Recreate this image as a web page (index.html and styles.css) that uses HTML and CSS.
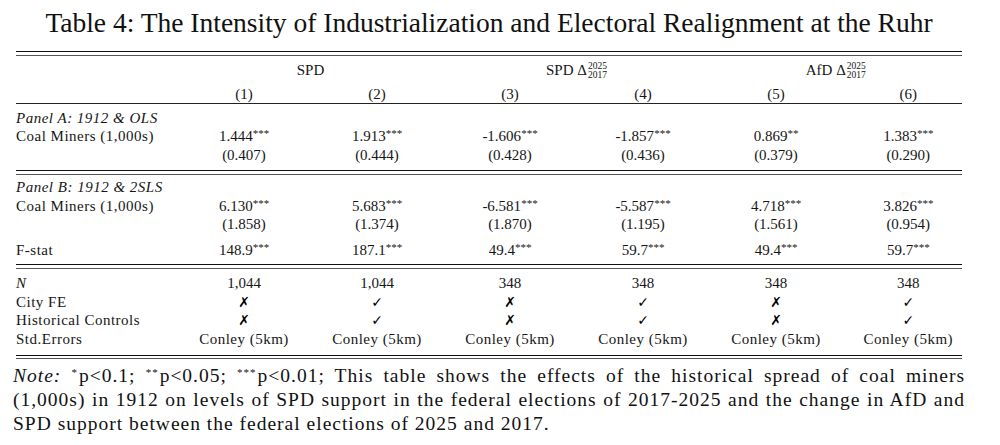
FILE: index.html
```html
<!DOCTYPE html>
<html>
<head>
<meta charset="utf-8">
<link rel="stylesheet" href="styles.css">
</head>
<body>
<div class="page">
  <h1 class="title">Table 4: The Intensity of Industrialization and Electoral Realignment at the Ruhr</h1>
  <div class="tbl">
    <div class="rule-double top"></div>
    <div class="row head1">
      <div class="lab"></div>
      <div class="span2">SPD</div>
      <div class="span2">SPD <span class="delta">Δ<span class="supsub"><span>2025</span><span>2017</span></span></span></div>
      <div class="span2">AfD <span class="delta">Δ<span class="supsub"><span>2025</span><span>2017</span></span></span></div>
    </div>
    <div class="row head2">
      <div class="lab"></div>
      <div>(1)</div><div>(2)</div><div>(3)</div><div>(4)</div><div>(5)</div><div class="last">(6)</div>
    </div>
    <div class="rule-single"></div>

    <div class="section sec-a">
      <div class="row"><div class="lab it">Panel A: 1912 &amp; OLS</div></div>
      <div class="row">
        <div class="lab">Coal Miners (1,000s)</div>
        <div>1.444<sup>***</sup></div><div>1.913<sup>***</sup></div><div>-1.606<sup>***</sup></div><div>-1.857<sup>***</sup></div><div>0.869<sup>**</sup></div><div class="last">1.383<sup>***</sup></div>
      </div>
      <div class="row">
        <div class="lab"></div>
        <div>(0.407)</div><div>(0.444)</div><div>(0.428)</div><div>(0.436)</div><div>(0.379)</div><div class="last">(0.290)</div>
      </div>
    </div>
    <div class="rule-double mid"></div>

    <div class="section sec-b">
      <div class="row"><div class="lab it">Panel B: 1912 &amp; 2SLS</div></div>
      <div class="row">
        <div class="lab">Coal Miners (1,000s)</div>
        <div>6.130<sup>***</sup></div><div>5.683<sup>***</sup></div><div>-6.581<sup>***</sup></div><div>-5.587<sup>***</sup></div><div>4.718<sup>***</sup></div><div class="last">3.826<sup>***</sup></div>
      </div>
      <div class="row">
        <div class="lab"></div>
        <div>(1.858)</div><div>(1.374)</div><div>(1.870)</div><div>(1.195)</div><div>(1.561)</div><div class="last">(0.954)</div>
      </div>
      <div class="row fstat">
        <div class="lab">F-stat</div>
        <div>148.9<sup>***</sup></div><div>187.1<sup>***</sup></div><div>49.4<sup>***</sup></div><div>59.7<sup>***</sup></div><div>49.4<sup>***</sup></div><div class="last">59.7<sup>***</sup></div>
      </div>
    </div>
    <div class="rule-double mid"></div>

    <div class="section sec-c">
      <div class="row">
        <div class="lab it">N</div>
        <div>1,044</div><div>1,044</div><div>348</div><div>348</div><div>348</div><div class="last">348</div>
      </div>
      <div class="row">
        <div class="lab">City FE</div>
        <div class="mk">✗</div><div class="mk">✓</div><div class="mk">✗</div><div class="mk">✓</div><div class="mk">✗</div><div class="mk last">✓</div>
      </div>
      <div class="row">
        <div class="lab">Historical Controls</div>
        <div class="mk">✗</div><div class="mk">✓</div><div class="mk">✗</div><div class="mk">✓</div><div class="mk">✗</div><div class="mk last">✓</div>
      </div>
      <div class="row">
        <div class="lab">Std.Errors</div>
        <div class="txt">Conley (5km)</div><div class="txt">Conley (5km)</div><div class="txt">Conley (5km)</div><div class="txt">Conley (5km)</div><div class="txt">Conley (5km)</div><div class="txt last">Conley (5km)</div>
      </div>
    </div>
    <div class="rule-double mid"></div>
  </div>
  <p class="note"><span class="ln"><em>Note:</em> <sup>*</sup>p&lt;0.1; <sup>**</sup>p&lt;0.05; <sup>***</sup>p&lt;0.01; This table shows the effects of the historical spread of coal miners</span><span class="ln">(1,000s) in 1912 on levels of SPD support in the federal elections of 2017-2025 and the change in AfD and</span><span class="ln end">SPD support between the federal elections of 2025 and 2017.</span></p>
</div>
</body>
</html>
```

FILE: styles.css
```css
html, body {
  margin: 0;
  padding: 0;
  background: #ffffff;
}
body {
  font-family: "Liberation Serif", "DejaVu Serif", serif;
  color: #161616;
}
.page {
  width: 946px;
  margin-left: 16px;
}
.title {
  margin: 8px 0 0 0;
  height: 30px;
  line-height: 30px;
  font-size: 27.5px;
  font-weight: normal;
  text-align: center;
  white-space: nowrap;
  color: #111;
}
.tbl {
  margin-top: 13px;
  font-size: 15px;
}
.rule-double {
  height: 3px;
  border-top: 1px solid #111;
  border-bottom: 1.3px solid #555;
}
.rule-double.mid {
  height: 2.5px;
}
.rule-single {
  height: 0;
  border-top: 1px solid #222;
}
.row {
  display: grid;
  grid-template-columns: 161.5px repeat(5, 133px) 119.5px;
  height: 18.6px;
  line-height: 18.6px;
  white-space: nowrap;
}
.row > div {
  text-align: center;
}
.row > div.last {
  padding-left: 12px;
}
.row > .lab {
  text-align: left;
  letter-spacing: 0.5px;
}
.row > .txt {
  letter-spacing: 0.5px;
}
.it {
  font-style: italic;
}
.head1 {
  height: 29px;
  line-height: 29px;
  grid-template-columns: 161.5px 266px 266px 252.5px;
}
.head2 {
  height: 18px;
  line-height: 18px;
}
.row sup {
  font-size: 11px;
  vertical-align: 4px;
  line-height: 0;
}
.delta {
  display: inline-flex;
  align-items: center;
}
.supsub {
  display: inline-flex;
  flex-direction: column;
  font-size: 9.5px;
  line-height: 8.5px;
  margin-left: 1px;
}
.sec-a {
  padding-top: 4.5px;
  padding-bottom: 6px;
}
.sec-b {
  padding-top: 3.5px;
  padding-bottom: 4.5px;
}
.fstat {
  margin-top: 7px;
}
.sec-c {
  padding-top: 5.4px;
  padding-bottom: 6.5px;
}
.mk {
  font-family: "DejaVu Sans", sans-serif;
  font-size: 14px;
  color: #000;
}
.note {
  margin: 4.6px 0 0 -3px;
  width: 952px;
  font-size: 19.5px;
  letter-spacing: 1px;
  line-height: 24px;
  text-align: justify;
  color: #111;
}
.note .ln {
  display: block;
  text-align-last: justify;
}
.note .ln.end {
  text-align-last: left;
}
.note sup {
  font-size: 11px;
  vertical-align: 6px;
  line-height: 0;
  margin-right: 1px;
}
```
